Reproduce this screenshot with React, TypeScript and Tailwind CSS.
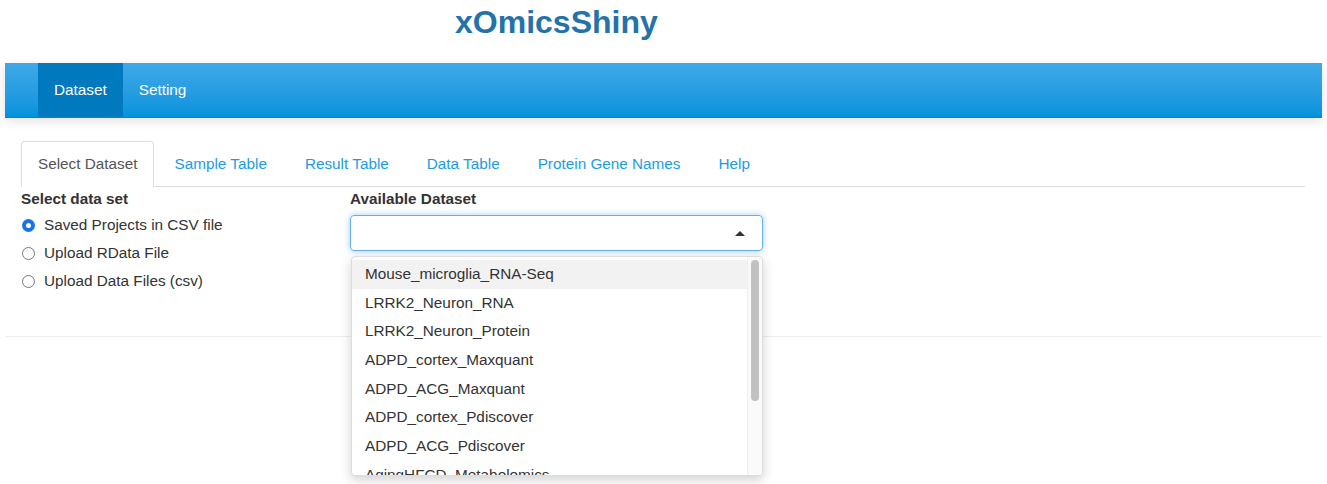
import React, { useState } from 'react';

const tabs = ['Select Dataset', 'Sample Table', 'Result Table', 'Data Table', 'Protein Gene Names', 'Help'];

const sources = ['Saved Projects in CSV file', 'Upload RData File', 'Upload Data Files (csv)'];

const datasets = [
  'Mouse_microglia_RNA-Seq',
  'LRRK2_Neuron_RNA',
  'LRRK2_Neuron_Protein',
  'ADPD_cortex_Maxquant',
  'ADPD_ACG_Maxquant',
  'ADPD_cortex_Pdiscover',
  'ADPD_ACG_Pdiscover',
  'AgingHFCD_Metabolomics',
];

export default function App() {
  const [source, setSource] = useState(0);
  const [activeTab, setActiveTab] = useState(0);

  return (
    <div className="min-h-screen bg-white px-[5px] text-[#333] font-['Liberation_Sans',Arial,sans-serif]">
      {/* Title */}
      <div className="h-[63px] pt-[6px] pl-[450px]">
        <h1 className="text-[32px] leading-[32px] font-bold text-[#2372aa]">xOmicsShiny</h1>
      </div>

      {/* Navbar */}
      <nav className="h-[55px] flex pl-[33px] bg-gradient-to-b from-[#3ea9e7] to-[#0192dd] border-b border-[#0b82c6] shadow-[0_3px_10px_rgba(0,0,0,0.12)]">
        <a className="h-full flex items-center pt-[1px] px-[16px] bg-[#0079be] text-white text-[15.3px]">Dataset</a>
        <a className="h-full flex items-center pt-[1px] px-[16px] text-white text-[15.3px]">Setting</a>
      </nav>

      {/* Tabs */}
      <div className="mt-[23px] pl-[16px] pr-[17px]">
        <ul className="flex border-b border-[#ddd] h-[46px]">
          {tabs.map((t, i) => (
            <li
              key={t}
              onClick={() => setActiveTab(i)}
              className={
                i === activeTab
                  ? 'h-[46px] flex items-center pt-[1px] px-[16px] mr-[2px] text-[15.3px] text-[#555] bg-white border border-[#ddd] border-b-white rounded-t-[4px] cursor-pointer'
                  : 'h-[45px] flex items-center pt-[1px] px-[18px] mr-[2px] text-[15.3px] text-[#1b9ce2] cursor-pointer'
              }
            >
              {t}
            </li>
          ))}
        </ul>

        {/* Content */}
        <div className="flex pt-[2px] h-[149px]">
          <div className="w-[329px]">
            <div className="text-[15.3px] leading-[20px] font-bold">Select data set</div>
            <div className="mt-[2px] flex flex-col">
              {sources.map((s, i) => (
                <label key={s} className="h-[28px] flex items-center gap-[9px] text-[15.3px] cursor-pointer">
                  <span
                    onClick={() => setSource(i)}
                    className={
                      i === source
                        ? 'w-[13px] h-[13px] rounded-full bg-[#1673f0] flex items-center justify-center ml-[1px]'
                        : 'w-[13px] h-[13px] rounded-full border border-[#777] bg-white ml-[1px]'
                    }
                  >
                    {i === source && <span className="w-[5px] h-[5px] rounded-full bg-white" />}
                  </span>
                  {s}
                </label>
              ))}
            </div>
          </div>

          <div className="relative w-[413px]">
            <div className="text-[15.3px] leading-[20px] font-bold">Available Dataset</div>
            <div className="mt-[6px] h-[36px] rounded-[4px] border border-[#66afe9] shadow-[0_0_6px_rgba(102,175,233,0.6)] flex items-center justify-end pr-[17px]">
              <span className="w-0 h-0 border-l-[5px] border-r-[5px] border-b-[5px] border-l-transparent border-r-transparent border-b-[#333]" />
            </div>

            {/* Open dropdown menu */}
            <div className="absolute left-[1px] top-[67px] w-[412px] h-[220px] bg-white border border-[#ddd] rounded-[4px] shadow-[0_4px_12px_rgba(0,0,0,0.18)] flex overflow-hidden">
              <div className="flex-1 pt-[3px] border-r border-[#eee]">
                {datasets.map((d, i) => (
                  <div
                    key={d}
                    className={
                      'h-[28.7px] flex items-center pl-[13px] text-[15.3px] text-[#333] whitespace-nowrap ' +
                      (i === 0 ? 'bg-[#f2f2f2]' : '')
                    }
                  >
                    {d}
                  </div>
                ))}
              </div>
              <div className="w-[14px] pt-[3px] flex justify-center bg-[#fafafa]">
                <div className="w-[8px] h-[141px] rounded-full bg-[#c2c2c2]" />
              </div>
            </div>
          </div>
        </div>
      </div>

      <hr className="border-0 border-t border-[#eee]" />
    </div>
  );
}
